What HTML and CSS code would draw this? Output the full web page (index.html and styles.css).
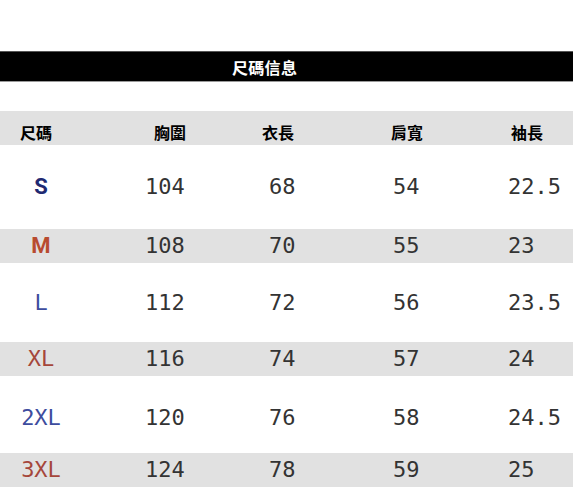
FILE: index.html
```html
<!DOCTYPE html>
<html lang="zh-Hant">
<head>
<meta charset="utf-8">
<title>尺碼信息</title>
<link rel="stylesheet" href="styles.css">
</head>
<body>
<div class="page">
  <div class="title-bar"><span class="title">尺碼信息</span></div>
  <div class="table">
    <div class="row head">
      <div class="c1">尺碼</div><div class="c2">胸圍</div><div class="c3">衣長</div><div class="c4">肩寬</div><div class="c5">袖長</div>
    </div>
    <div class="row data white first">
      <div class="c1 size navy bold">S</div><div class="c2">104</div><div class="c3">68</div><div class="c4">54</div><div class="c5">22.5</div>
    </div>
    <div class="row data grey">
      <div class="c1 size red bold">M</div><div class="c2">108</div><div class="c3">70</div><div class="c4">55</div><div class="c5">23</div>
    </div>
    <div class="row data white">
      <div class="c1 size blue">L</div><div class="c2">112</div><div class="c3">72</div><div class="c4">56</div><div class="c5">23.5</div>
    </div>
    <div class="row data grey">
      <div class="c1 size rust">XL</div><div class="c2">116</div><div class="c3">74</div><div class="c4">57</div><div class="c5">24</div>
    </div>
    <div class="row data white last">
      <div class="c1 size blue">2XL</div><div class="c2">120</div><div class="c3">76</div><div class="c4">58</div><div class="c5">24.5</div>
    </div>
    <div class="row data grey">
      <div class="c1 size rust">3XL</div><div class="c2">124</div><div class="c3">78</div><div class="c4">59</div><div class="c5">25</div>
    </div>
  </div>
</div>
</body>
</html>
```

FILE: styles.css
```css
html, body {
  margin: 0;
  padding: 0;
  background: #ffffff;
}

.page {
  width: 573px;
  padding-top: 51px;
  font-family: "Noto Sans CJK TC", "Noto Sans CJK SC", sans-serif;
}

.title-bar {
  height: 29px;
  background: #000000;
  border-top: 1px solid #555555;
  border-bottom: 1px solid #9a9a9a;
  display: flex;
  align-items: center;
  padding-left: 232px;
}

.title {
  color: #ffffff;
  font-weight: 700;
  font-size: 16px;
  line-height: 1;
  letter-spacing: 0.3px;
}

.table {
  margin-top: 29px;
}

.row {
  display: grid;
  grid-template-columns: 82px 150px 118px 120px 103px;
  align-items: center;
}

.head {
  height: 34px;
  background: #e1e1e1;
  font-weight: 700;
  font-size: 16px;
  color: #000000;
  padding-top: 8px;
  box-sizing: border-box;
}

.head .c1 { padding-left: 20px; }
.head .c2 { padding-left: 72px; }
.head .c3 { padding-left: 30px; }
.head .c4 { padding-left: 41px; }
.head .c5 { padding-left: 41px; }

.data {
  font-family: "DejaVu Sans Mono", "Liberation Mono", monospace;
  font-size: 22px;
  color: #333333;
  line-height: 1;
}

.data .c1 { text-align: center; }
.data .c2 { padding-left: 63px; }
.data .c3 { padding-left: 37px; }
.data .c4 { padding-left: 43px; }
.data .c5 { padding-left: 38px; }

.white { height: 79px; }
.white.first { height: 84px; }
.white.last { height: 77px; padding-top: 6px; box-sizing: border-box; }
.grey { height: 34px; background: #e1e1e1; }

.size { font-size: 22px; }
.bold {
  font-family: Roboto, "Liberation Sans", sans-serif;
  font-weight: 700;
  font-size: 22px;
}
.navy { color: #1f2a72; }
.red { color: #b84b2f; }
.blue { color: #3d4c9e; }
.rust { color: #a5463b; }
```
